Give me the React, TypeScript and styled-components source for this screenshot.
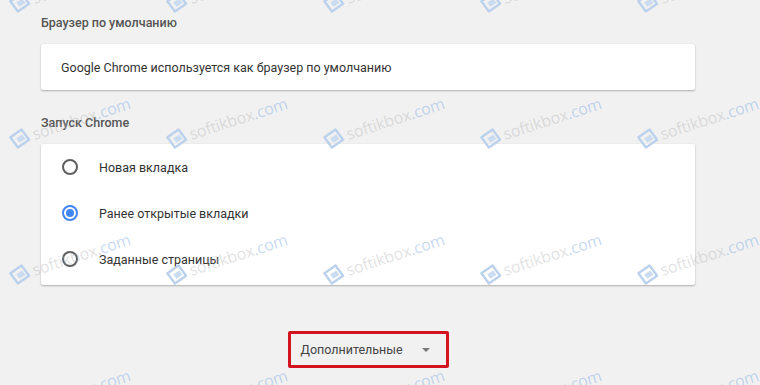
import React from 'react';
import styled, { createGlobalStyle } from 'styled-components';

const GlobalStyle = createGlobalStyle`
  html, body {
    margin: 0;
    padding: 0;
    background: #f1f1f1;
    font-family: Roboto, 'Liberation Sans', Arial, sans-serif;
    overflow: hidden;
  }
`;

// watermark grid of the original screenshot
const markCols = [8, 165, 322, 479, 636];
const markRows = [2, 138, 274, 410];

const startupOptions = [
  { label: 'Новая вкладка', checked: false },
  { label: 'Ранее открытые вкладки', checked: true },
  { label: 'Заданные страницы', checked: false }
];

const LogoMark = () => (
  <svg width="24" height="22" viewBox="0 0 24 22">
    <path d="M3 7 L16 3 L20 15 L7 19 Z" fill="none" stroke="#bcd2ec" strokeWidth="2.4" strokeLinejoin="round" />
    <path d="M8 10 L15 8 L17 13 L10 15 Z" fill="#cbdcf0" />
  </svg>
);

const App = () => {
  return (
    <Page>
      <GlobalStyle />
      <Column>
        <SectionTitle>Браузер по умолчанию</SectionTitle>
        <Card>
          <InfoRow>Google Chrome используется как браузер по умолчанию</InfoRow>
        </Card>

        <SectionTitle $spaced>Запуск Chrome</SectionTitle>
        <Card $padded>
          {startupOptions.map((opt) => (
            <RadioRow key={opt.label}>
              <Radio $checked={opt.checked} />
              <RadioLabel>{opt.label}</RadioLabel>
            </RadioRow>
          ))}
        </Card>

        <ButtonWrap>
          <AdvancedButton>
            <span>Дополнительные</span>
            <Caret />
          </AdvancedButton>
        </ButtonWrap>
      </Column>

      <Watermarks>
        {markRows.map((y) =>
          markCols.map((x) => (
            <Mark key={`${x}-${y}`} style={{ left: x, top: y }}>
              <LogoMark />
              <MarkText>
                softikbox<MarkDomain>.com</MarkDomain>
              </MarkText>
            </Mark>
          ))
        )}
      </Watermarks>
    </Page>
  );
};

export default App;

const Page = styled.div`
  position: relative;
  width: 760px;
  height: 385px;
  background: #f1f1f1;
  overflow: hidden;
`;

const Column = styled.div`
  width: 654px;
  margin-left: 41px;
  padding-top: 14px;
  display: flex;
  flex-direction: column;
`;

const SectionTitle = styled.div<{ $spaced?: boolean }>`
  font-size: 12.5px;
  font-weight: 500;
  line-height: 18px;
  color: #555;
  margin-top: ${(p) => (p.$spaced ? '24px' : '0')};
  margin-bottom: 12px;
`;

const Card = styled.div<{ $padded?: boolean }>`
  background: #fff;
  border-radius: 2px;
  box-shadow: 0 1px 2px rgba(0, 0, 0, 0.28), 0 0 1px rgba(0, 0, 0, 0.08);
  padding: ${(p) => (p.$padded ? '0 0 3px' : '0')};
`;

const InfoRow = styled.div`
  height: 46px;
  display: flex;
  align-items: center;
  padding-left: 20px;
  font-size: 12.5px;
  color: #333;
`;

const RadioRow = styled.div`
  height: 46px;
  display: flex;
  align-items: center;
  padding-left: 21px;
`;

const Radio = styled.span<{ $checked?: boolean }>`
  box-sizing: border-box;
  width: 16px;
  height: 16px;
  border-radius: 50%;
  border: 2px solid ${(p) => (p.$checked ? '#4285f4' : '#5f5f5f')};
  display: flex;
  align-items: center;
  justify-content: center;
  &::after {
    content: '';
    width: 8px;
    height: 8px;
    border-radius: 50%;
    background: #4285f4;
    display: ${(p) => (p.$checked ? 'block' : 'none')};
  }
`;

const RadioLabel = styled.span`
  margin-left: 21px;
  font-size: 12.5px;
  color: #333;
`;

const ButtonWrap = styled.div`
  display: flex;
  justify-content: center;
  margin-top: 46px;
`;

const AdvancedButton = styled.button`
  box-sizing: border-box;
  width: 161px;
  height: 37px;
  display: flex;
  align-items: center;
  padding: 0 0 0 10px;
  background: transparent;
  border: 3px solid #d3131f;
  border-radius: 2px;
  font-family: Roboto, 'Liberation Sans', Arial, sans-serif;
  font-size: 12.5px;
  color: #444;
  cursor: pointer;
`;

const Caret = styled.span`
  width: 0;
  height: 0;
  margin-left: auto;
  margin-right: 16px;
  border-left: 4px solid transparent;
  border-right: 4px solid transparent;
  border-top: 4px solid #777;
`;

const Watermarks = styled.div`
  position: absolute;
  inset: 0;
  pointer-events: none;
`;

const Mark = styled.div`
  position: absolute;
  display: flex;
  align-items: center;
  gap: 1px;
  transform-origin: 10px 10px;
  transform: translateY(-10px) rotate(-18deg);
`;

const MarkText = styled.span`
  font-family: 'Open Sans', 'DejaVu Sans', sans-serif;
  font-size: 16px;
  letter-spacing: -0.2px;
  color: rgba(170, 170, 170, 0.35);
  white-space: nowrap;
`;

const MarkDomain = styled.span`
  color: rgba(120, 165, 225, 0.42);
`;
